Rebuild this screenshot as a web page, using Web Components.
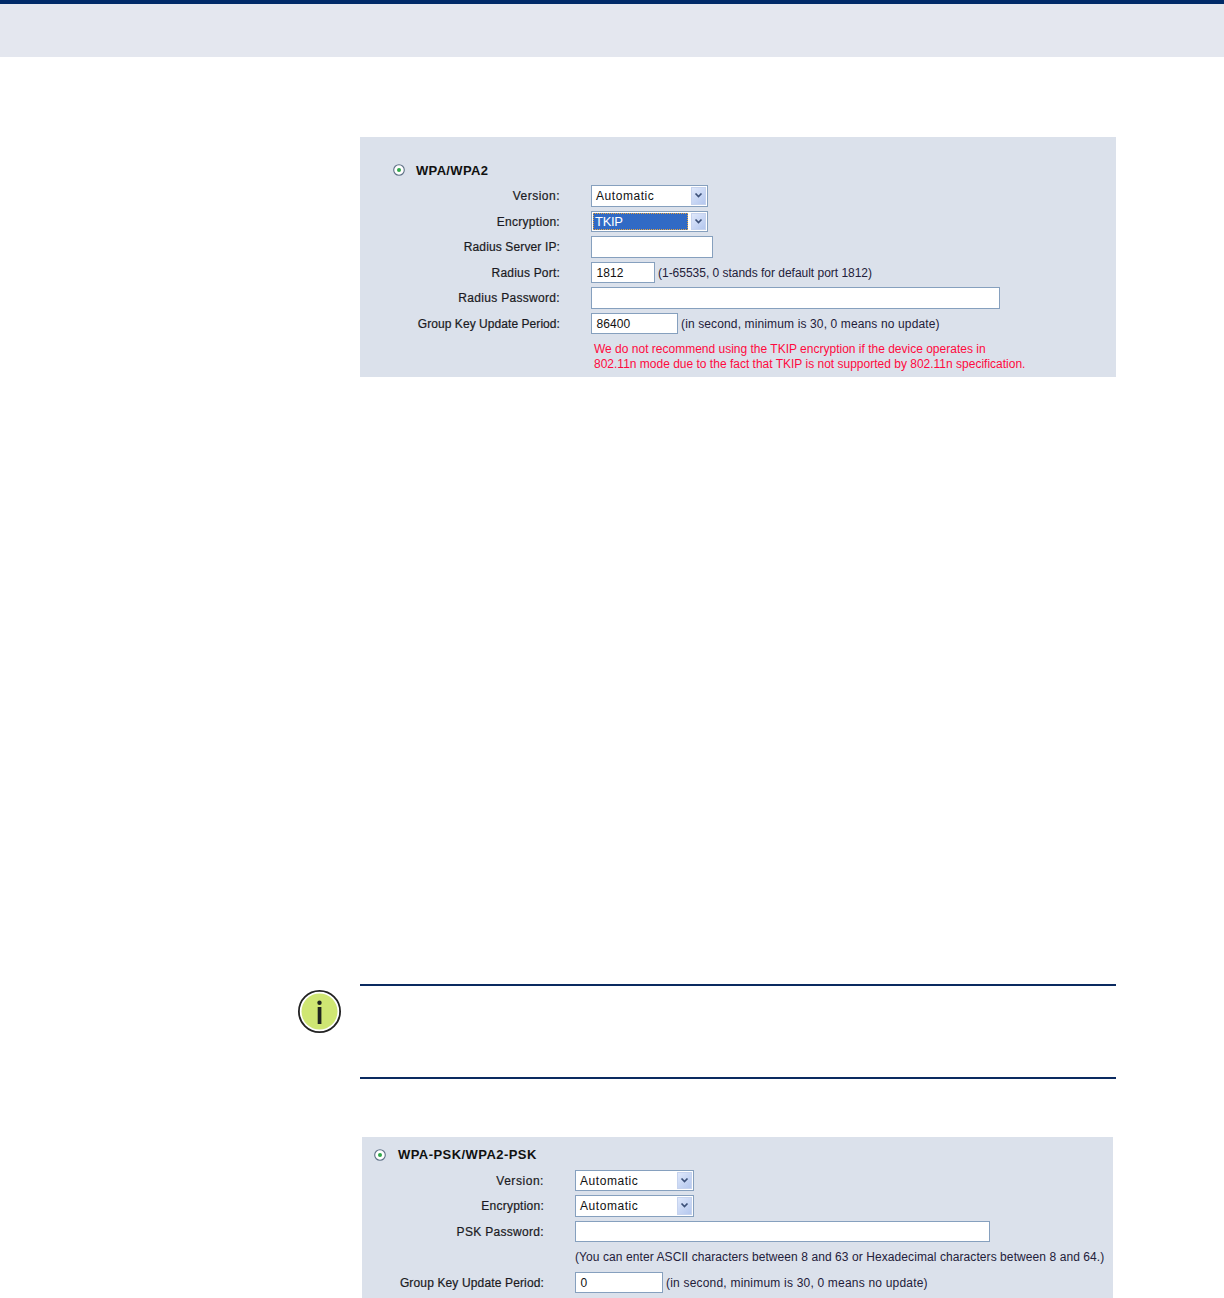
<!DOCTYPE html>
<html lang="en"><head><meta charset="utf-8"><title>Security settings</title>
<style>
html,body{margin:0;padding:0;background:#fff}
body{height:1298px;overflow:hidden;font:12px/21px "Liberation Sans",Arial,sans-serif;color:#1c1c24}
</style></head><body>
<doc-header></doc-header>
<doc-main>
  <form-panel style="--top:80px;--left:62px;--width:756px;--pt:22px;--pl:33px;--rg:11px;--label:200px;--pb:4.5px;--tls:.33px" title-text="WPA/WPA2">
    <form-row style="--ls:.5px" label="Version:"><fake-select w="117" value="Automatic"></fake-select></form-row>
    <form-row style="--ls:.3px" label="Encryption:"><fake-select w="117" value="TKIP" focused></fake-select></form-row>
    <form-row style="--ls:.13px" label="Radius Server IP:"><text-field w="122"></text-field></form-row>
    <form-row style="--ls:.2px;--hs:-.02px" label="Radius Port:"><text-field w="64" value="1812"></text-field><span>(1-65535, 0 stands for default port 1812)</span></form-row>
    <form-row style="--ls:.31px" label="Radius Password:"><text-field w="409"></text-field></form-row>
    <form-row style="--ls:.06px;--hs:.13px" label="Group Key Update Period:"><text-field w="87" value="86400"></text-field><span>(in second, minimum is 30, 0 means no update)</span></form-row>
    <warn-text>We do not recommend using the TKIP encryption if the device operates in<br>802.11n mode due to the fact that TKIP is not supported by 802.11n specification.</warn-text>
  </form-panel>
  <note-block></note-block>
  <form-panel style="--top:58px;--left:64px;--width:751px;--pt:7px;--pl:12px;--rg:12px;--label:182px;--pb:20px;--tls:.44px" title-text="WPA-PSK/WPA2-PSK">
    <form-row style="--ls:.55px" label="Version:"><fake-select w="119" value="Automatic"></fake-select></form-row>
    <form-row style="--ls:.25px" label="Encryption:"><fake-select w="119" value="Automatic"></fake-select></form-row>
    <form-row style="--ls:.31px" label="PSK Password:"><text-field w="415"></text-field></form-row>
    <form-row style="--hs:.08px" label=""><span>(You can enter ASCII characters between 8 and 63 or Hexadecimal characters between 8 and 64.)</span></form-row>
    <form-row style="--ls:.14px;--hs:.2px" label="Group Key Update Period:"><text-field w="88" value="0"></text-field><span>(in second, minimum is 30, 0 means no update)</span></form-row>
  </form-panel>
</doc-main>
<script>
function def(name, html){
  customElements.define(name, class extends HTMLElement{
    connectedCallback(){
      if(this.shadowRoot) return;
      const r=this.attachShadow({mode:'open'});
      r.innerHTML=typeof html==='function'?html(this):html;
    }
  });
}
def('doc-header',`<style>:host{display:block;height:53px;border-top:4px solid #002a68;background:#e4e7ef}</style>`);
def('doc-main',`<style>:host{display:block;width:818px;margin-left:298px}</style><slot></slot>`);
def('form-panel',el=>`<style>
:host{display:block;margin-top:var(--top);margin-left:var(--left);width:var(--width);box-sizing:border-box;
background:#dbe1eb;padding:var(--pt) 0 var(--pb) 0}
.t{display:flex;align-items:center;height:22px;margin-bottom:4px;padding-left:var(--pl);gap:var(--rg);
font-weight:bold;font-size:13px;color:#111;letter-spacing:var(--tls)}
svg{display:block;flex:none}
</style>
<div class="t"><svg width="12" height="12" viewBox="0 0 12 12" aria-hidden="true"><circle cx="6" cy="6" r="5.3" fill="#fff" stroke="#5e7086" stroke-width="1.1"/><circle cx="6" cy="6" r="2" fill="#2fa84a"/></svg><span>${el.getAttribute('title-text')}</span></div>
<slot></slot>`);
def('form-row',el=>`<style>
:host{display:grid;grid-template-columns:var(--label) 1fr;column-gap:31px;height:25.5px;align-items:start}
.l{text-align:right;color:#1a1a22;-webkit-text-stroke:.2px #1a1a22;white-space:nowrap;letter-spacing:var(--ls,0);line-height:23px}
.f{display:flex;gap:3px;white-space:nowrap;color:#23203a;letter-spacing:var(--hs,0);line-height:22px;min-height:0}
</style><div class="l">${el.getAttribute('label')}</div><div class="f"><slot></slot></div>`);
def('text-field',el=>`<style>
:host{display:block;box-sizing:border-box;width:${el.getAttribute('w')}px;height:21.5px;flex:none;background:#fff;border:1.5px solid #86a0be;padding-left:4.5px;line-height:20px;color:#111;letter-spacing:.05px}
</style>${el.getAttribute('value')||''}`);
def('fake-select',el=>{
 const f=el.hasAttribute('focused');
 return `<style>
:host{display:flex;box-sizing:border-box;width:${el.getAttribute('w')}px;height:21.5px;flex:none;background:#fff;border:1.5px solid #86a0be;align-items:stretch;padding:1px;color:#111;letter-spacing:.55px}
.v{flex:1;line-height:18px;padding-left:3px;${f?'background:#316ac5;color:#fff;outline:1px dotted #e8a33c;outline-offset:-1px;padding-left:2px;margin-right:3px;font-size:13px;letter-spacing:-.3px;line-height:17px':''}}
.b{width:15px;flex:none;background:linear-gradient(135deg,#dfe8fb,#b4c7ee);border:1px solid #c6d3ee;box-sizing:border-box;display:flex;align-items:center;justify-content:center}
</style><div class="v">${el.getAttribute('value')}</div><div class="b"><svg width="9" height="7" viewBox="0 0 9 7" aria-hidden="true"><path d="M1.5 1.5 4.5 4.5 7.5 1.5" fill="none" stroke="#3c5078" stroke-width="1.7"/></svg></div>`;});
def('warn-text',`<style>:host{display:block;margin-left:234px;padding-top:4px;line-height:15px;color:#ff0a40;white-space:nowrap}</style><slot></slot>`);
def('note-block',`<style>
:host{display:flex;margin-top:607px;align-items:flex-start}
svg{display:block;flex:none;margin-top:6px;margin-right:18px}
.b{box-sizing:border-box;width:756px;height:95px;border-top:2px solid #0a2a60;border-bottom:2px solid #0a2a60}
</style><svg width="44" height="44" viewBox="0 0 44 44" aria-hidden="true"><circle cx="21.5" cy="21.5" r="20.6" fill="#fff" stroke="#222" stroke-width="1.8"/><circle cx="21.5" cy="21.5" r="18" fill="#cfe673"/><rect x="19.7" y="17" width="3.7" height="17" fill="#1f2420"/><circle cx="21.5" cy="12.8" r="2.2" fill="#1f2420"/></svg><div class="b"></div>`);
</script>
</body></html>
